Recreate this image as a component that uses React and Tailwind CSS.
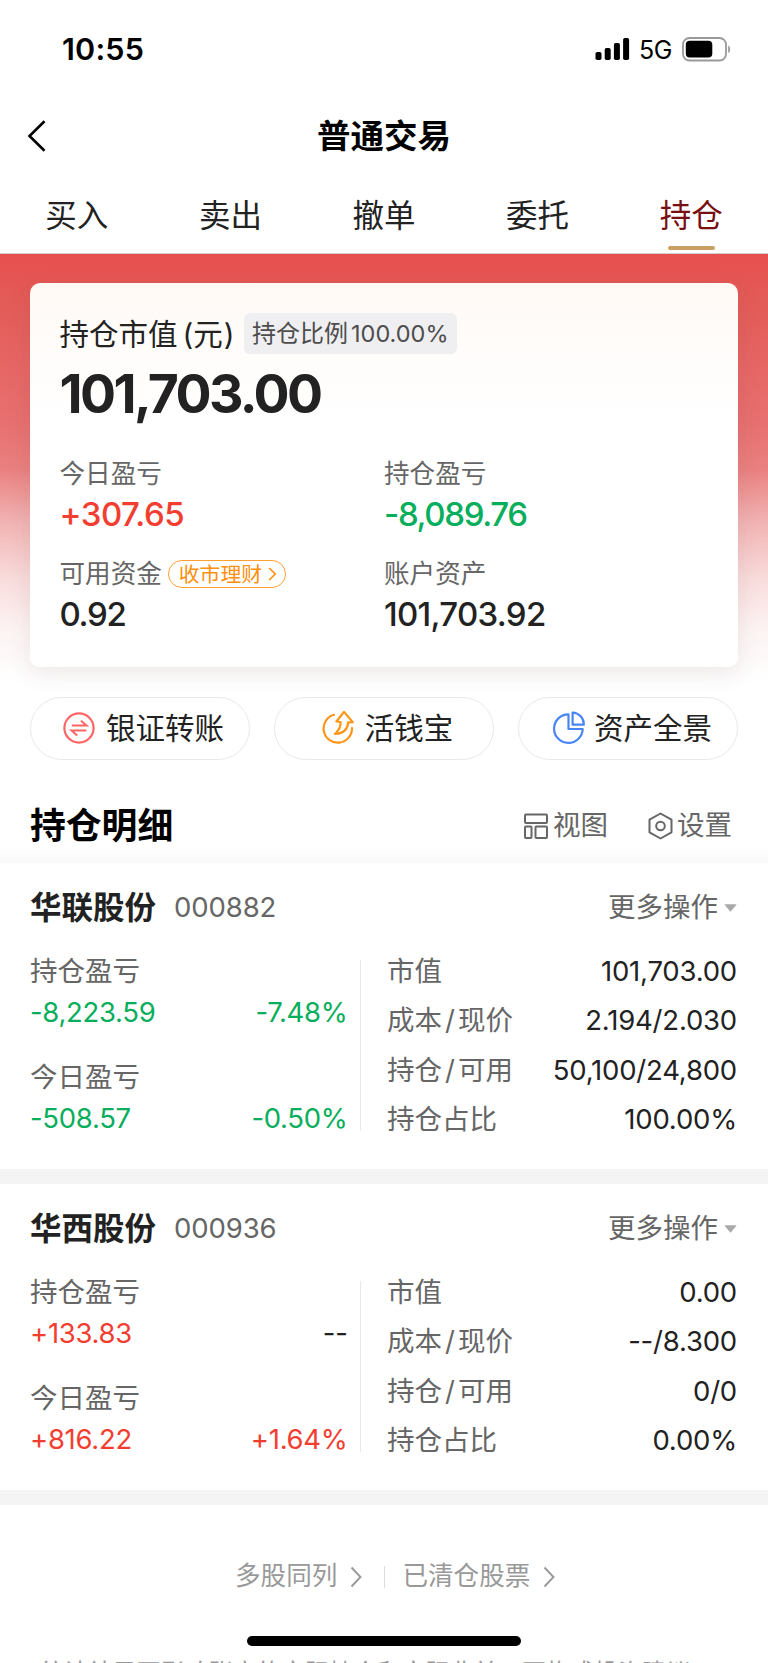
const NUM = "font-['Inter','Noto_Sans_CJK_SC',sans-serif]";

function StatusBar() {
  return (
    <div className="flex h-[98px] items-center justify-between pr-[37px] pl-[62px]">
      <span className="text-[30.500px] leading-[30px] font-semibold tracking-[0.200px]">10:55</span>
      <div className="flex items-center">
        <svg width="35" height="24" viewBox="0 0 35 24" fill="#000">
          <rect x="0.5" y="15" width="6" height="8" rx="1.8" />
          <rect x="9.7" y="11" width="6" height="12" rx="1.8" />
          <rect x="18.9" y="6" width="6" height="17" rx="1.8" />
          <rect x="28.1" y="1" width="6" height="22" rx="1.8" />
        </svg>
        <span className="mt-[2px] ml-[9px] w-[43px] text-[25px] leading-[25px] tracking-[-0.400px]">5G</span>
        <svg width="49" height="25" viewBox="0 0 49 25" fill="none">
          <rect x="1" y="1" width="43" height="22.5" rx="6.5" stroke="#999" strokeWidth="1.8" />
          <rect x="3.8" y="3.8" width="26.5" height="16.8" rx="4" fill="#000" />
          <path d="M46.2 8.5c2.6 1 2.6 6.6 0 7.6z" fill="#999" />
        </svg>
      </div>
    </div>
  );
}

function Tabs() {
  return (
    <div className="grid h-[76px] grid-cols-5 border-b border-[#cfcfcf] text-center text-[31.5px]">
      {["买入", "卖出", "撤单", "委托", "持仓"].map((t) => (
        <div key={t} className="flex flex-col items-center">
          <span className={"leading-[76px] h-[68px] " + (t === "持仓" ? "text-[#780f12]" : "text-[#222]")}>{t}</span>
          {t === "持仓" && <span className="h-[4px] w-[47px] rounded-full bg-[#c9a063]" />}
        </div>
      ))}
    </div>
  );
}

function Metric({ label, value, color, extra }) {
  return (
    <div>
      <div className="flex h-[40px] items-center pt-[2px] text-[25.6px] text-[#666]">
        {label}
        {extra}
      </div>
      <div className={"h-[40px] text-[33px] leading-[42px] font-medium " + color}>{value}</div>
    </div>
  );
}

function Pill() {
  return (
    <span className="ml-[6px] flex h-[28px] w-[118px] items-center justify-center gap-[6px] rounded-full border-[1.5px] border-[#ffa033] pl-[2px] text-[20.800px] leading-[21px] text-[#ff8f0f]">
      收市理财
      <svg width="9" height="14" viewBox="0 0 9 14" fill="none" stroke="#ff8f0f" strokeWidth="1.7">
        <path d="M1.2 1l6 6-6 6" />
      </svg>
    </span>
  );
}

function Summary() {
  return (
    <div className="h-[443px] bg-[linear-gradient(to_bottom,#e8504f_0px,#e35b57_45px,#e87070_170px,#ea8080_215px,#f2b5b5_270px,#f9dcdc_325px,#fdf3f3_375px,#ffffff_430px)] px-[30px] pt-[29px]">
      <div className="h-[384px] w-[708px] rounded-[10px] bg-[linear-gradient(to_bottom,#fff9f5_0px,#fffcfa_60px,#ffffff_140px)] px-[29.500px] pt-[30px] shadow-[0_6px_24px_rgba(90,60,60,0.10)]">
        <div className="flex h-[41px] items-center">
          <span className="w-[184.500px] pt-[2px] text-[29.5px] whitespace-nowrap text-[#222]">持仓市值<span className="ml-[5px]">(</span>元<span className="ml-[1px]">)</span></span>
          <span className="flex h-[41px] w-[213px] items-center rounded-[6px] bg-[#efeff2] pl-[8px] text-[24px] whitespace-nowrap text-[#4d4d4d]">
            持仓比例<span className="ml-[3px] text-[23.5px]">100.00%</span>
          </span>
        </div>
        <div className="mt-[10px] h-[60px] text-[53.500px] leading-[60px] font-bold tracking-[-2.600px] text-[#222]">101,703.00</div>
        <div className="mt-[29px] grid grid-cols-[324.500px_1fr] gap-y-[20px]">
          <Metric label="今日盈亏" value="+307.65" color="text-[#f23e31] tracking-[-0.500px]" />
          <Metric label="持仓盈亏" value="-8,089.76" color="text-[#07ae5c] tracking-[-1.350px]" />
          <Metric label="可用资金" value="0.92" color="text-[#222] tracking-[-1.300px]" extra={<Pill />} />
          <Metric label="账户资产" value="101,703.92" color="text-[#222] tracking-[-0.700px]" />
        </div>
      </div>
    </div>
  );
}

function TransferIcon() {
  return (
    <svg width="32" height="34" viewBox="0 0 32 34" fill="none" stroke="#ff6567" strokeWidth="2.200">
      <circle cx="16" cy="17" r="14.6" />
      <path d="M8.800 14.500h14.800l-5.600-4.800M23.400 19.600h-14.800l5.600 4.800" strokeWidth="2" />
    </svg>
  );
}

function CashIcon() {
  return (
    <svg width="32" height="34" viewBox="0 0 32 34" fill="none" stroke="#ff9415" strokeWidth="2.200" strokeLinejoin="round" strokeLinecap="round">
      <path d="M12 3.800A14.200 14.200 0 1 0 30 17.200" />
      <path d="M22 0.900l-7.600 9.600 4.100.5c.6 5-1.800 8.500-5.600 12 8.500-.3 12.600-3.800 13.300-11.600l4.600-.3z" />
    </svg>
  );
}

function PieIcon() {
  return (
    <svg className="ml-[2px] mr-[-2px]" width="32" height="34" viewBox="0 0 32 34" fill="none" stroke="#4a85f6" strokeWidth="2.200" strokeLinejoin="round">
      <path d="M15.500 3.300A14.300 14.300 0 1 0 29.700 18H15.500z" />
      <path d="M19.600 1.500v12.200h11.200A11.800 11.800 0 0 0 19.600 1.500z" />
    </svg>
  );
}

function Actions() {
  const items = [
    ["银证转账", <TransferIcon />],
    ["活钱宝", <CashIcon />],
    ["资产全景", <PieIcon />],
  ];
  return (
    <div className="grid h-[63px] grid-cols-3 gap-[24px] px-[30px]">
      {items.map(([t, icon]) => (
        <div key={t} className="flex items-center justify-center gap-[11px] rounded-full border border-[#e9e9e9] bg-white pb-[2px] pl-[7px] text-[29.5px] text-[#222]">
          {icon}
          <span className="leading-[40px]">{t}</span>
        </div>
      ))}
    </div>
  );
}

function SectionHead() {
  return (
    <div className="flex h-[103px] items-center bg-[linear-gradient(to_bottom,#fff_88px,#f9f9f9_103px)] pt-[28px] pr-[36px] pb-[0px] pl-[30px]">
      <h2 className="flex-1 text-[35.800px] leading-[50px] font-bold text-black">持仓明细</h2>
      <div className="flex items-center text-[27.5px] text-[#666]">
        <svg width="24" height="26" viewBox="0 0 24 26" fill="none" stroke="#666" strokeWidth="2">
          <rect x="1" y="1.500" width="22" height="8.500" rx="1" />
          <rect x="1" y="13.500" width="6.500" height="11.500" rx="1" />
          <rect x="11.500" y="13.500" width="11.500" height="11.500" rx="1" />
        </svg>
        <span className="ml-[5px]">视图</span>
        <svg className="ml-[39px]" width="26" height="28" viewBox="0 0 26 28" fill="none" stroke="#666" strokeWidth="2" strokeLinejoin="round">
          <path d="M13.500 1.500l11 6.200v12.600l-11 6.200-11-6.200V7.700z" />
          <circle cx="13.500" cy="14" r="4.300" />
        </svg>
        <span className="ml-[4px]">设置</span>
      </div>
    </div>
  );
}

function Pair({ label, value, pct, color, pctColor }) {
  return (
    <div>
      <div className="h-[41px] leading-[41px] text-[#666]">{label}</div>
      <div className="flex h-[41px] justify-between leading-[41px] tracking-[-0.300px]">
        <span className={color}>{value}</span>
        <span className={pctColor}>{pct}</span>
      </div>
    </div>
  );
}

function RowLabel({ text }) {
  const [a, b] = text.split("/");
  return (
    <span className="text-[#666]">
      {a}
      {b && <span className="mx-[3px]">/</span>}
      {b}
    </span>
  );
}

function Stock({ name, code, pairs, rows }) {
  return (
    <section className="h-[321px] border-b-[15px] border-[#f4f4f4] px-[30px] text-[27.500px]">
      <div className="flex h-[88px] items-center pt-[2px]">
        <span className="text-[31.500px] font-bold text-[#222]">{name}</span>
        <span className="ml-[18px] flex-1 tracking-[-0.100px] text-[#666]">{code}</span>
        <span className="text-[#666]">更多操作</span>
        <svg className="mr-[1px] ml-[6px]" width="13" height="8" viewBox="0 0 13 8" fill="#aaa">
          <path d="M.8 .3h11.400q.5 0 0 .7L7 7.300q-.5.500-1 0L.8 1q-.5-.7 0-.7z" />
        </svg>
      </div>
      <div className="flex">
        <div className="flex h-[189px] w-[317.500px] flex-col gap-[24px]">
          {pairs.map((p) => <Pair key={p.label} {...p} />)}
        </div>
        <div className="mt-[9px] ml-[12.500px] h-[171px] w-px bg-[#e8e8e8]" />
        <div className="ml-[26px] w-[350px]">
          {rows.map(([k, v]) => (
            <div key={k} className="mb-[8.300px] flex h-[41px] justify-between leading-[41px]">
              <RowLabel text={k} />
              <span className="tracking-[-0.200px] text-[#222]">{v}</span>
            </div>
          ))}
        </div>
      </div>
    </section>
  );
}

function Chevron() {
  return (
    <svg width="12" height="22" viewBox="0 0 12 22" fill="none" stroke="#999" strokeWidth="1.900">
      <path d="M1.500 1.500l9 9.500-9 9.500" />
    </svg>
  );
}

export default function App() {
  const red = "text-[#f23e31]";
  const green = "text-[#07ae5c]";
  return (
    <div className={"relative h-[1663px] w-[768px] overflow-hidden bg-white text-black " + NUM}>
      <StatusBar />
      <header className="grid h-[80px] grid-cols-[60px_1fr_60px] items-center pb-[5px]">
        <svg className="ml-[27px]" width="20" height="32" viewBox="0 0 20 32" fill="none" stroke="#000" strokeWidth="2.600">
          <path d="M17.500 1.200L2.500 16l15 14.800" />
        </svg>
        <h1 className="text-center text-[33.500px] leading-[74px] font-bold">普通交易</h1>
      </header>
      <Tabs />
      <Summary />
      <Actions />
      <SectionHead />
      <Stock
        name="华联股份"
        code="000882"
        pairs={[
          { label: "持仓盈亏", value: "-8,223.59", pct: "-7.48%", color: green, pctColor: green },
          { label: "今日盈亏", value: "-508.57", pct: "-0.50%", color: green, pctColor: green },
        ]}
        rows={[["市值", "101,703.00"], ["成本/现价", "2.194/2.030"], ["持仓/可用", "50,100/24,800"], ["持仓占比", "100.00%"]]}
      />
      <Stock
        name="华西股份"
        code="000936"
        pairs={[
          { label: "持仓盈亏", value: "+133.83", pct: "--", color: red, pctColor: "text-[#222]" },
          { label: "今日盈亏", value: "+816.22", pct: "+1.64%", color: red, pctColor: red },
        ]}
        rows={[["市值", "0.00"], ["成本/现价", "--/8.300"], ["持仓/可用", "0/0"], ["持仓占比", "0.00%"]]}
      />
      <footer>
        <div className="flex h-[140px] items-center pt-[3px] pl-[235px] text-[25.600px] text-[#999]">
          <span>多股同列</span>
          <span className="ml-[13px]"><Chevron /></span>
          <span className="ml-[22px] h-[22px] w-px bg-[#ddd]" />
          <span className="ml-[17px]">已清仓股票</span>
          <span className="ml-[13px]"><Chevron /></span>
        </div>
        <p className="mt-[12px] pl-[40px] text-[24.100px] leading-[32px] whitespace-nowrap text-[#999]">统计结果不影响账户的实际持仓和实际收益，不构成投资建议</p>
      </footer>
      <div className="absolute top-[1636px] left-[247px] h-[10px] w-[274px] rounded-full bg-black" />
    </div>
  );
}
